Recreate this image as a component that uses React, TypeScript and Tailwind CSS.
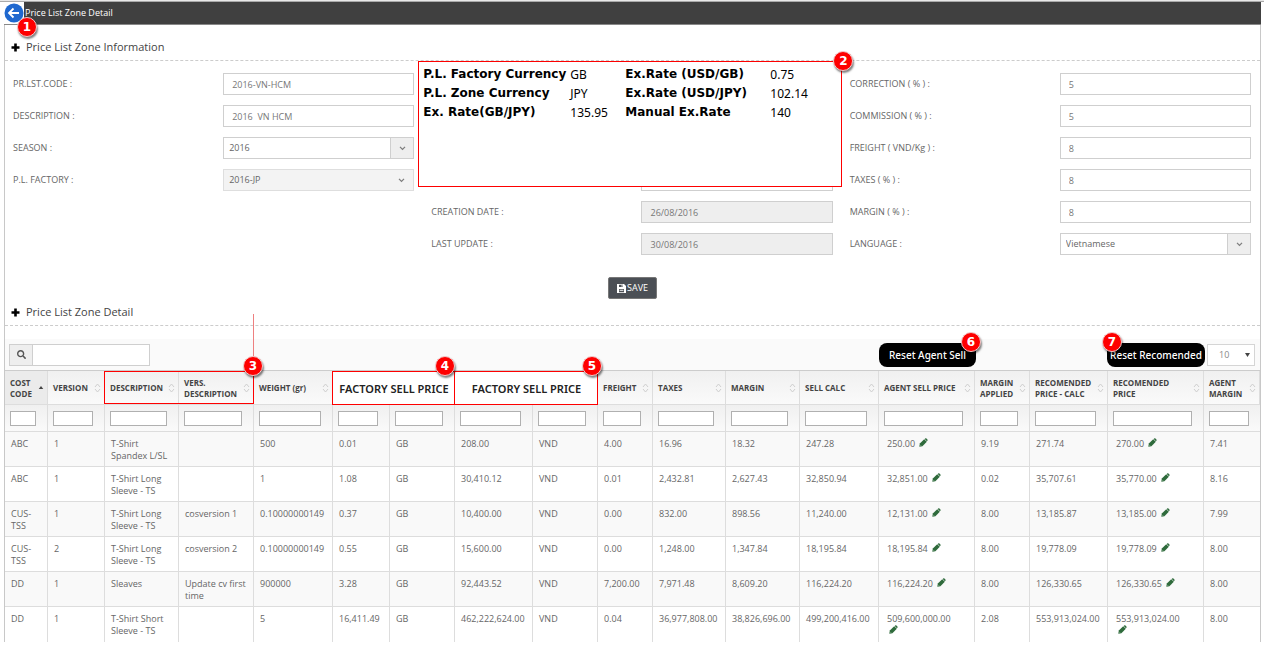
import React from "react";
import { FaSearch } from "react-icons/fa";

type Field = {
  label: string;
  value: string;
  kind?: "text" | "select";
  disabled?: boolean;
};

const leftFields: Field[] = [
  { label: "PR.LST.CODE :", value: "2016-VN-HCM" },
  { label: "DESCRIPTION :", value: "2016  VN HCM" },
  { label: "SEASON :", value: "2016", kind: "select" },
  { label: "P.L. FACTORY :", value: "2016-JP", kind: "select", disabled: true },
];

const middleFields: Field[] = [
  { label: "CREATION DATE :", value: "26/08/2016", disabled: true },
  { label: "LAST UPDATE :", value: "30/08/2016", disabled: true },
];

const rightFields: Field[] = [
  { label: "CORRECTION ( % ) :", value: "5" },
  { label: "COMMISSION ( % ) :", value: "5" },
  { label: "FREIGHT ( VND/Kg ) :", value: "8" },
  { label: "TAXES ( % ) :", value: "8" },
  { label: "MARGIN ( % ) :", value: "8" },
  { label: "LANGUAGE :", value: "Vietnamese", kind: "select" },
];

const rates = [
  ["P.L. Factory Currency", "GB", "Ex.Rate (USD/GB)", "0.75"],
  ["P.L. Zone Currency", "JPY", "Ex.Rate (USD/JPY)", "102.14"],
  ["Ex. Rate(GB/JPY)", "135.95", "Manual Ex.Rate", "140"],
];

const columnWidths = [43, 57, 74, 75, 79, 57, 65, 78, 65, 55, 73, 74, 79, 96, 55, 78, 96, 56];

const rows: string[][] = [
  ["ABC", "1", "T-Shirt Spandex L/SL", "", "500", "0.01", "GB", "208.00", "VND", "4.00", "16.96", "18.32", "247.28", "250.00", "9.19", "271.74", "270.00", "7.41"],
  ["ABC", "1", "T-Shirt Long Sleeve - TS", "", "1", "1.08", "GB", "30,410.12", "VND", "0.01", "2,432.81", "2,627.43", "32,850.94", "32,851.00", "0.02", "35,707.61", "35,770.00", "8.16"],
  ["CUS-TSS", "1", "T-Shirt Long Sleeve - TS", "cosversion 1", "0.10000000149", "0.37", "GB", "10,400.00", "VND", "0.00", "832.00", "898.56", "11,240.00", "12,131.00", "8.00", "13,185.87", "13,185.00", "7.99"],
  ["CUS-TSS", "2", "T-Shirt Long Sleeve - TS", "cosversion 2", "0.10000000149", "0.55", "GB", "15,600.00", "VND", "0.00", "1,248.00", "1,347.84", "18,195.84", "18,195.84", "8.00", "19,778.09", "19,778.09", "8.00"],
  ["DD", "1", "Sleaves", "Update cv first time", "900000", "3.28", "GB", "92,443.52", "VND", "7,200.00", "7,971.48", "8,609.20", "116,224.20", "116,224.20", "8.00", "126,330.65", "126,330.65", "8.00"],
  ["DD", "1", "T-Shirt Short Sleeve - TS", "", "5", "16,411.49", "GB", "462,222,624.00", "VND", "0.04", "36,977,808.00", "38,826,696.00", "499,200,416.00", "509,600,000.00", "2.08", "553,913,024.00", "553,913,024.00", "8.00"],
];

function Badge({ n, className }: { n: number; className: string }) {
  return (
    <span
      className={`absolute z-20 flex size-5 items-center justify-center rounded-full border border-[#f3c9c9] bg-[#fe0000] font-['DejaVu_Sans'] text-[12px] leading-none font-bold text-white shadow-[1px_2px_2px_rgba(0,0,0,0.5)] ${className}`}
    >
      {n}
    </span>
  );
}

function Chevron() {
  return (
    <svg viewBox="0 0 8 6" className="h-[5px] w-[7px]" fill="none" stroke="#7d7d7d" strokeWidth="1.5">
      <path d="M1 1l3 3 3-3" />
    </svg>
  );
}

function PlusIcon() {
  return (
    <svg viewBox="0 0 9 9" className="size-[9px]" fill="#000">
      <path d="M3.200.500h2.600v2.700h2.700v2.600H5.800v2.700H3.200V5.800H.500V3.200h2.700z" />
    </svg>
  );
}

function PencilIcon() {
  return (
    <svg viewBox="0 0 9 9" className="size-[9px]">
      <path d="M.300 8.700l.500-3.100 4.400-4.400 2.600 2.600-4.400 4.400z" fill="#2f6b3c" />
      <path d="M6.200.600c.400-.400.800-.400 1.200 0l1 1c.400.400.400.800 0 1.200l-.500.500L5.700 1.100z" fill="#2f6b3c" />
      <path d="M1.200 6.900l.900.900" stroke="#dfe8df" strokeWidth=".5" />
    </svg>
  );
}

function SaveIcon() {
  return (
    <svg viewBox="0 0 9 9" className="size-[9px]">
      <path d="M0 0h7l2 2v7H0z" fill="#fff" />
      <path d="M2 .800h4V3H2zM2 5h5v3.200H2z" fill="#4b4f55" />
      <path d="M4.600 1h1v1.700h-1zM2.600 5.800h3.800v1H2.600z" fill="#fff" />
    </svg>
  );
}

function SortIcon() {
  return (
    <svg viewBox="0 0 7 10" className="h-[10px] w-[7px] shrink-0" fill="none" stroke="#cfcfcf" strokeWidth="1">
      <path d="M1 4l2.500-3 2.500 3M1 6l2.500 3 2.500-3" />
    </svg>
  );
}

function FieldRow({ field }: { field: Field }) {
  const id = field.label.replace(/[^A-Za-z]/g, "").toLowerCase();
  return (
    <div className="grid grid-cols-2 items-center">
      <label htmlFor={id} className="px-2">
        {field.label}
      </label>
      <div className="px-[9px]">
        {field.kind === "select" ? (
          <div className="grid h-[22px]">
            <select
              id={id}
              disabled={field.disabled}
              className="col-start-1 row-start-1 h-[22px] w-full appearance-none border border-[#cfcfcf] bg-white pl-[5px] text-[#666] disabled:border-[#dedede] disabled:bg-[#f3f3f3] disabled:opacity-100"
            >
              <option>{field.value}</option>
            </select>
            <span
              className={`pointer-events-none col-start-1 row-start-1 my-px mr-px flex w-[23px] items-center justify-center justify-self-end ${
                field.disabled ? "" : "border-l border-[#cfcfcf] bg-[#eee]"
              }`}
            >
              <Chevron />
            </span>
          </div>
        ) : (
          <input
            id={id}
            defaultValue={field.value}
            disabled={field.disabled}
            className="block h-[22px] w-full border border-[#cfcfcf] bg-white px-2 text-[#777] disabled:bg-[#eee]"
          />
        )}
      </div>
    </div>
  );
}

function SectionTitle({ children }: { children: React.ReactNode }) {
  return (
    <h2 className="flex h-[27px] items-center gap-[6px] border-b border-dashed border-[#ccc] pl-[6px] text-[11px] text-[#444]">
      <PlusIcon />
      {children}
    </h2>
  );
}

function Head({
  children,
  sorted,
  mark,
}: {
  children: React.ReactNode;
  sorted?: boolean;
  mark?: React.ReactNode;
}) {
  return (
    <th
      className={`relative border-r border-b border-[#ddd] pr-[3px] pl-[5px] text-left font-bold ${
        sorted ? "bg-[#ebebeb]" : "bg-linear-to-b from-[#f0f0f0] to-[#fafafa]"
      }`}
    >
      <div className="flex items-center justify-between">
        <span>{children}</span>
        {sorted ? (
          <svg viewBox="0 0 6 4" className="h-[3px] w-[6px] shrink-0" fill="#444">
            <path d="M0 4l3-4 3 4z" />
          </svg>
        ) : (
          <SortIcon />
        )}
      </div>
      {mark}
    </th>
  );
}

function PriceHead({ n, badge }: { n: number; badge: string }) {
  return (
    <th
      colSpan={2}
      className="relative bg-white text-center font-['Noto_Sans'] text-[11px] font-semibold whitespace-nowrap text-[#222]"
    >
      FACTORY SELL PRICE
      <span className="absolute inset-y-0 right-0 -left-px border border-[#fe0000]" />
      <Badge n={n} className={badge} />
    </th>
  );
}

export default function App() {
  return (
    <div className="min-h-[649px] bg-white font-['Open_Sans',sans-serif] text-[9px] leading-[12px] text-[#666]">
      <div className="h-[2px] border-b border-[#aaa] bg-[#e8e8e8]" />
      <main className="mr-[3px] ml-1">
        <header className="relative flex h-[23px] items-stretch border-b border-[#888]">
          <button aria-label="Back" className="flex w-5 items-center bg-white">
            <svg viewBox="0 0 20 20" className="size-5 shrink-0">
              <circle cx="10" cy="10" r="9.500" fill="#1f68cf" />
              <path d="M15 10H5.500M9.500 5.500L5 10l4.500 4.500" fill="none" stroke="#fff" strokeWidth="1.800" />
            </svg>
          </button>
          <h1 className="flex flex-1 items-center bg-[#404040] pl-px text-[9px] text-white">Price List Zone Detail</h1>
          <Badge n={1} className="top-[15px] left-[13px]" />
        </header>

        <div className="border-x border-[#c8c8c8]">
          <section>
            <div className="pt-[9px]">
              <SectionTitle>Price List Zone Information</SectionTitle>
            </div>
            <form className="relative grid grid-cols-3 pt-[12px]" onSubmit={(e) => e.preventDefault()}>
              <div className="grid auto-rows-[22px] gap-y-[10px]">
                {leftFields.map((f) => (
                  <FieldRow key={f.label} field={f} />
                ))}
              </div>
              <div className="grid auto-rows-[22px] content-end gap-y-[10px]">
                <div className="grid grid-cols-2">
                  <input aria-label="Exchange rate" className="col-start-2 mx-[9px] h-[22px] border border-[#cfcfcf]" />
                </div>
                {middleFields.map((f) => (
                  <FieldRow key={f.label} field={f} />
                ))}
              </div>
              <div className="grid auto-rows-[22px] gap-y-[10px]">
                {rightFields.map((f) => (
                  <FieldRow key={f.label} field={f} />
                ))}
              </div>

              <div className="absolute top-0 left-1/3 z-10 -ml-[5px] h-[126px] w-[424px] border border-[#fe0000] bg-white px-1 pt-[3px] font-['DejaVu_Sans'] text-[12px] leading-[19px] text-black">
                <dl className="grid grid-cols-[147px_55px_145px_1fr] whitespace-nowrap">
                  {rates.map(([a, b, c, d]) => (
                    <React.Fragment key={a}>
                      <dt className="font-bold">{a}</dt>
                      <dd className="font-['Noto_Sans']">{b}</dd>
                      <dt className="font-bold">{c}</dt>
                      <dd className="font-['Noto_Sans']">{d}</dd>
                    </React.Fragment>
                  ))}
                </dl>
                <Badge n={2} className="-top-[11px] -right-[12px]" />
              </div>

              <div className="col-span-3 flex justify-center pt-[22px]">
                <button className="flex h-[22px] w-[49px] items-center justify-center gap-px rounded-[2px] border border-[#777] bg-[#4b4f55] text-[9px] text-white">
                  <SaveIcon />
                  SAVE
                </button>
              </div>
            </form>
          </section>

          <section>
            <SectionTitle>Price List Zone Detail</SectionTitle>
            <div className="mt-[13px] flex h-[31px] items-center bg-[#fafafa] pr-[5px] pl-1">
              <label htmlFor="search" className="flex h-[22px] w-[23px] items-center justify-center border border-r-0 border-[#cfcfcf] bg-[#eee]">
                <FaSearch aria-label="Search" className="size-[9px] text-[#555]" />
              </label>
              <input id="search" className="h-[22px] w-[118px] border border-[#cfcfcf] bg-white px-1" />
              <div className="relative mr-[131px] ml-auto">
                <button className="h-[24px] w-[97px] rounded-[8px] bg-black font-['Noto_Sans'] text-[10px] font-medium whitespace-nowrap text-white">
                  Reset Agent Sell
                </button>
                <Badge n={6} className="-top-[11px] -right-[5px]" />
              </div>
              <div className="relative mr-[2px]">
                <button className="h-[24px] w-[98px] rounded-[8px] bg-black font-['Noto_Sans'] text-[10px] font-medium whitespace-nowrap text-white">
                  Reset Recomended
                </button>
                <Badge n={7} className="-top-[11px] -left-[5px]" />
              </div>
              <div className="grid">
                <select aria-label="Rows per page" className="col-start-1 row-start-1 h-[22px] w-[48px] appearance-none border border-[#d5d5d5] bg-white pl-[11px] text-[#888]">
                  <option>10</option>
                </select>
                <svg viewBox="0 0 5 4" className="pointer-events-none col-start-1 row-start-1 mr-[5px] h-[4px] w-[5px] self-center justify-self-end" fill="#444">
                  <path d="M0 0h5L2.500 4z" />
                </svg>
              </div>
            </div>

            <table className="w-full table-fixed border-separate border-spacing-0 border-t border-[#ccc]">
              <colgroup>
                {columnWidths.map((w, i) => (
                  <col key={i} style={{ width: w }} />
                ))}
              </colgroup>
              <thead>
                <tr className="h-[34px] text-[8px] leading-[11px] text-[#444]">
                  <Head sorted>COST CODE</Head>
                  <Head>VERSION</Head>
                  <Head mark={<span className="absolute inset-y-0 -left-px right-0 border-y border-l border-[#fe0000]" />}>DESCRIPTION</Head>
                  <Head
                    mark={
                      <>
                        <span className="absolute inset-y-0 -right-px -left-px z-10 border-y border-r border-[#fe0000]" />
                        <span className="absolute -top-[57px] -right-px h-[57px] w-px bg-[#ee8080]" />
                        <Badge n={3} className="-top-[15px] -right-[10px]" />
                      </>
                    }
                  >
                    VERS. DESCRIPTION
                  </Head>
                  <Head>WEIGHT (gr)</Head>
                  <PriceHead n={4} badge="-top-[15px] right-0" />
                  <PriceHead n={5} badge="-top-[15px] -right-[4px]" />
                  <Head>FREIGHT</Head>
                  <Head>TAXES</Head>
                  <Head>MARGIN</Head>
                  <Head>SELL CALC</Head>
                  <Head>AGENT SELL PRICE</Head>
                  <Head>MARGIN APPLIED</Head>
                  <Head>RECOMENDED PRICE - CALC</Head>
                  <Head>RECOMENDED PRICE</Head>
                  <Head>AGENT MARGIN</Head>
                </tr>
                <tr className="h-[27px]">
                  {columnWidths.map((_, i) => (
                    <td key={i} className="border-r border-b border-[#ddd] bg-linear-to-b from-[#f0f0f0] to-[#fafafa] pr-[11px] pl-[5px] last:border-r-0">
                      <input aria-label={`Filter column ${i + 1}`} className="block h-[15px] w-full border border-[#b0b0b0] bg-white" />
                    </td>
                  ))}
                </tr>
              </thead>
              <tbody>
                {rows.map((row, r) => (
                  <tr key={r} className="group h-[35px] odd:bg-[#f9f9f9]">
                    {row.map((cell, c) => {
                      const editable = c === 13 || c === 16;
                      return (
                        <td
                          key={c}
                          className={`border-r border-b border-[#ddd] pt-[6px] align-top group-last:border-b-0 last:border-r-0 ${
                            editable ? "pr-4 pl-[8px]" : "pr-[5px] pl-[6px]"
                          }`}
                        >
                          {cell}
                          {editable && (
                            <>
                              {" "}
                              <button aria-label="Edit" className="ml-[2px] inline-block align-baseline">
                                <PencilIcon />
                              </button>
                            </>
                          )}
                        </td>
                      );
                    })}
                  </tr>
                ))}
              </tbody>
            </table>
          </section>
        </div>
      </main>
    </div>
  );
}
